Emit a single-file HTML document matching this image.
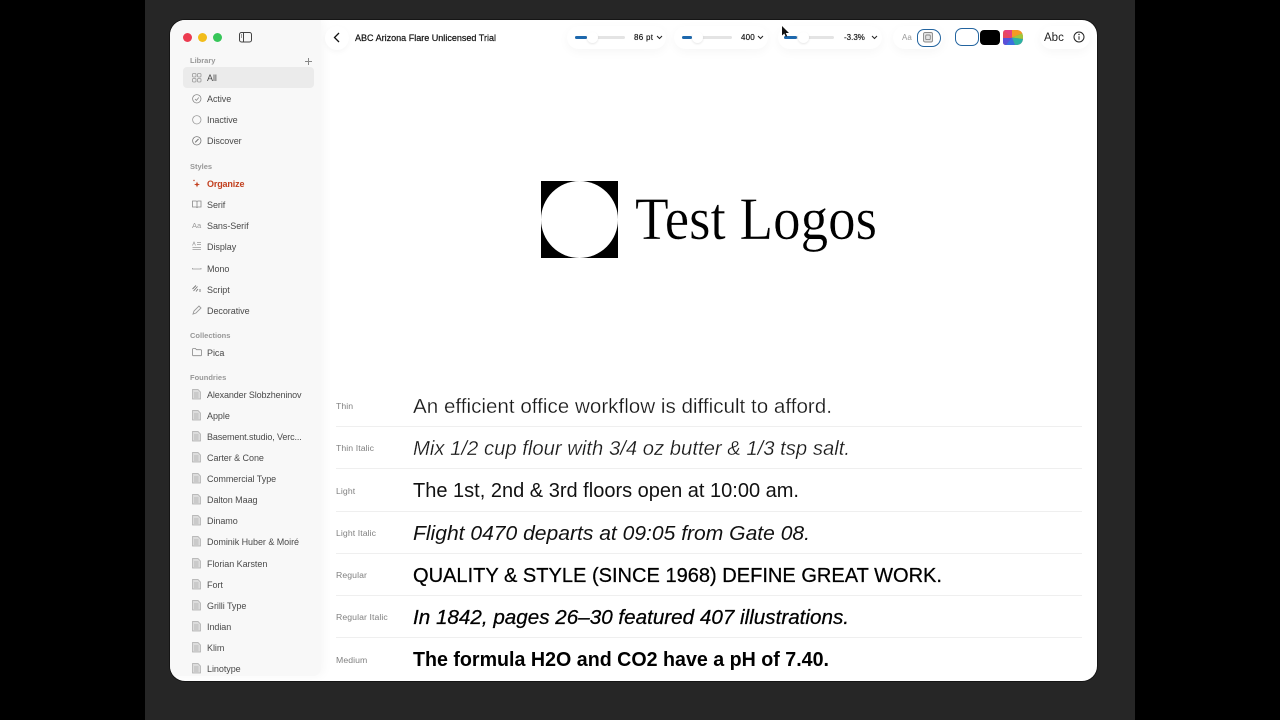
<!DOCTYPE html>
<html><head><meta charset="utf-8"><style>
html,body{margin:0;padding:0;width:1280px;height:720px;overflow:hidden;background:#000;font-family:"Liberation Sans",sans-serif}
#all{position:absolute;left:0;top:0;width:1280px;height:720px;filter:blur(.3px)}
#bg{position:absolute;left:145px;top:0;width:990px;height:720px;background:#262626}
#win{position:absolute;left:170px;top:20px;width:927px;height:661px;background:#fff;border-radius:15px;overflow:hidden;box-shadow:0 0 0 1px #151515}
#side{position:absolute;left:0;top:0;width:151px;height:656px;background:#f8f8f8;border-radius:0 0 8px 0;box-shadow:3px 0 10px rgba(0,0,0,.035)}
.a{position:absolute;white-space:nowrap}
.i{position:absolute;left:207px;font-size:9px;line-height:12px;color:#4a4a4a;white-space:nowrap;letter-spacing:-.05px}
.h{position:absolute;left:190px;font-size:7.5px;line-height:10px;color:#808080;font-weight:bold;white-space:nowrap;opacity:.8}
.l{position:absolute;left:336px;font-size:8.7px;line-height:12px;color:#808080;white-space:nowrap;letter-spacing:.08px}
.d{position:absolute;left:336px;width:746px;height:1px;background:#efefef}
.pill{position:absolute;background:#fff;border-radius:13px;box-shadow:0 3px 10px rgba(0,0,0,.04)}
.tr{position:absolute;height:3px;background:#e4e4e4;border-radius:2px}
.fi{position:absolute;height:3px;background:#1d68ad;border-radius:2px}
.kn{position:absolute;width:11px;height:11px;border-radius:50%;background:#fff;box-shadow:0 1px 2px rgba(0,0,0,.1)}
.v{position:absolute;font-size:8px;line-height:12px;color:#222;white-space:nowrap}
svg{position:absolute;overflow:visible}
</style></head><body><div id="all">
<div id="bg"></div>
<div id="win"><div id="side"></div></div>

<div class="a" style="left:183px;top:33px;width:9px;height:9px;border-radius:50%;background:#ec3b50"></div>
<div class="a" style="left:198px;top:33px;width:9px;height:9px;border-radius:50%;background:#f2bd1b"></div>
<div class="a" style="left:213px;top:33px;width:9px;height:9px;border-radius:50%;background:#37c659"></div>
<svg style="left:239px;top:32px" width="13" height="11" fill="none" stroke="#444" stroke-width="1"><rect x=".5" y=".5" width="12" height="9.5" rx="2"/><path d="M4.5 .5V10M2 3h1M2 5h1"/></svg>

<div class="h" style="top:56px">Library</div>
<svg style="left:305px;top:58px" width="7" height="7" stroke="#888" stroke-width="1"><path d="M3.5 0v7M0 3.500h7"/></svg>
<div class="a" style="left:183px;top:67px;width:131px;height:21px;background:#ebebeb;border-radius:4px"></div>
<div class="i" style="top:72px">All</div>
<svg style="left:192px;top:73px" width="10" height="10" fill="none" stroke="#999" stroke-width=".8"><rect x=".5" y=".5" width="3.500" height="3.500" rx="1"/><rect x="5.500" y=".5" width="3.500" height="3.500" rx="1"/><rect x=".5" y="5.500" width="3.500" height="3.500" rx="1"/><rect x="5.500" y="5.500" width="3.500" height="3.500" rx="1"/></svg>
<div class="i" style="top:93px">Active</div>
<svg style="left:192px;top:94px" width="10" height="10" fill="none" stroke="#888" stroke-width=".8"><circle cx="4.800" cy="4.800" r="4.200"/><path d="M3 5l1.400 1.400L6.800 3.500"/></svg>
<div class="i" style="top:114px">Inactive</div>
<svg style="left:192px;top:115px" width="10" height="10" fill="none" stroke="#999" stroke-width=".8"><circle cx="4.800" cy="4.800" r="4.200"/></svg>
<div class="i" style="top:135px">Discover</div>
<svg style="left:192px;top:136px" width="10" height="10" fill="none" stroke="#777" stroke-width=".8"><circle cx="4.800" cy="4.800" r="4.200"/><path d="M3.200 6.400L6.500 3" stroke-width="1.100"/></svg>

<div class="h" style="top:162px">Styles</div>
<div class="i" style="top:178px;color:#c2401f;font-weight:bold;letter-spacing:-.15px">Organize</div>
<svg style="left:192px;top:179px" width="10" height="10" fill="#c2401f"><path d="M5 2.500l.8 2.200L8 5.500l-2.200.8L5 8.500l-.8-2.200L2 5.500l2.200-.8z"/><circle cx="2" cy="1.500" r=".7"/></svg>
<div class="i" style="top:199px">Serif</div>
<svg style="left:192px;top:200px" width="10" height="9" fill="none" stroke="#888" stroke-width=".8"><path d="M.5 1h3.500q1 0 1 1v6q0-1-1-1H.5zM9 1H6q-1 0-1 1v6q0-1 1-1h3z"/></svg>
<div class="i" style="top:220px">Sans-Serif</div>
<div class="a" style="left:192px;top:221px;font-size:7.500px;line-height:10px;color:#999">Aa</div>
<div class="i" style="top:241px">Display</div>
<svg style="left:192px;top:241px" width="10" height="10" fill="none" stroke="#999" stroke-width=".7"><path d="M.5 4.500L2 1l1.500 3.500M5 1.500h4M5 3.500h4M.5 6.500h8.500M.5 8.500h8.500"/></svg>
<div class="i" style="top:263px">Mono</div>
<svg style="left:192px;top:267px" width="10" height="5" fill="none" stroke="#999" stroke-width=".8"><path d="M.5 1v1h8.500v-1"/></svg>
<div class="i" style="top:284px">Script</div>
<svg style="left:192px;top:284px" width="10" height="10" fill="none" stroke="#777" stroke-width=".9"><path d="M.5 5L4 1.500M1.500 7L5.500 2.500M4 7.500l2-2.500M8 5v3"/></svg>
<div class="i" style="top:305px">Decorative</div>
<svg style="left:192px;top:305px" width="10" height="10" fill="none" stroke="#999" stroke-width=".9"><path d="M1 9l1-3L7 1l2 2-5 5z"/></svg>

<div class="h" style="top:331px">Collections</div>
<div class="i" style="top:347px">Pica</div>
<svg style="left:192px;top:348px" width="10" height="9" fill="none" stroke="#888" stroke-width=".8"><path d="M.5 1.500q0-1 1-1h2l1 1.200h4q1 0 1 1v4q0 1-1 1h-7q-1 0-1-1z"/></svg>

<div class="h" style="top:373px">Foundries</div>
<div class="i" style="top:389px;letter-spacing:-.12px">Alexander Slobzheninov</div>
<div class="i" style="top:410px">Apple</div>
<div class="i" style="top:431px;letter-spacing:-.12px">Basement.studio, Verc...</div>
<div class="i" style="top:452px">Carter &amp; Cone</div>
<div class="i" style="top:473px">Commercial Type</div>
<div class="i" style="top:494px">Dalton Maag</div>
<div class="i" style="top:515px">Dinamo</div>
<div class="i" style="top:536px">Dominik Huber &amp; Moiré</div>
<div class="i" style="top:558px">Florian Karsten</div>
<div class="i" style="top:579px">Fort</div>
<div class="i" style="top:600px">Grilli Type</div>
<div class="i" style="top:621px">Indian</div>
<div class="i" style="top:642px">Klim</div>
<div class="i" style="top:663px">Linotype</div>
<svg style="left:192px;top:389px" width="10" height="285" fill="#dcdcdc" stroke="#aaa" stroke-width=".7">
<defs><g id="f"><path d="M.5.500h5.500l2.500 2.500v7H.5z"/><path d="M2 4h4.500M2 6h4.500M2 8h4.500" fill="none"/></g></defs>
<use href="#f" y="0"/><use href="#f" y="21"/><use href="#f" y="42"/><use href="#f" y="63"/><use href="#f" y="84"/><use href="#f" y="105"/><use href="#f" y="126"/><use href="#f" y="147"/><use href="#f" y="169"/><use href="#f" y="190"/><use href="#f" y="211"/><use href="#f" y="232"/><use href="#f" y="253"/><use href="#f" y="274"/></svg>

<div class="a" style="left:325px;top:26px;width:24px;height:24px;border-radius:50%;background:#fff;box-shadow:0 2px 6px rgba(0,0,0,.04)"></div>
<svg style="left:333px;top:32px" width="8" height="11" fill="none" stroke="#111" stroke-width="1.300"><path d="M6 1L1.500 5.500 6 10"/></svg>
<svg style="left:355px;top:30px" width="145" height="15"><text x="0" y="11" font-size="9" fill="#111" stroke="#111" stroke-width=".2" textLength="141" lengthAdjust="spacingAndGlyphs">ABC Arizona Flare Unlicensed Trial</text></svg>

<div class="pill" style="left:567px;top:26px;width:99px;height:23px"></div>
<div class="pill" style="left:674px;top:26px;width:94px;height:23px"></div>
<div class="pill" style="left:778px;top:26px;width:104px;height:23px"></div>
<div class="pill" style="left:893px;top:26px;width:50px;height:23px"></div>
<div class="pill" style="left:1040px;top:26px;width:50px;height:23px"></div>

<div class="tr" style="left:575px;top:36px;width:50px"></div><div class="fi" style="left:575px;top:36px;width:12px"></div><div class="kn" style="left:587px;top:32px"></div>
<div class="v" style="left:634px;top:32px;letter-spacing:.3px;text-shadow:0 0 .4px #111">86 pt</div>
<svg style="left:656px;top:35px" width="7" height="5" fill="none" stroke="#222" stroke-width="1"><path d="M1 1l2.500 2.500L6 1"/></svg>
<div class="tr" style="left:682px;top:36px;width:50px"></div><div class="fi" style="left:682px;top:36px;width:10px"></div><div class="kn" style="left:692px;top:32px"></div>
<div class="v" style="left:741px;top:32px;letter-spacing:.2px;text-shadow:0 0 .4px #111">400</div>
<svg style="left:757px;top:35px" width="7" height="5" fill="none" stroke="#222" stroke-width="1"><path d="M1 1l2.500 2.500L6 1"/></svg>
<div class="tr" style="left:784px;top:36px;width:50px"></div><div class="fi" style="left:784px;top:36px;width:13px"></div><div class="kn" style="left:798px;top:32px"></div>
<div class="v" style="left:844px;top:32px;text-shadow:0 0 .4px #111">-3.3%</div>
<svg style="left:871px;top:35px" width="7" height="5" fill="none" stroke="#222" stroke-width="1"><path d="M1 1l2.500 2.500L6 1"/></svg>
<svg style="left:782px;top:26px" width="8" height="12" fill="#111"><path d="M0 0v9.500l2.300-2 1.500 3.200 1.400-.6L3.800 7H7z"/></svg>

<div class="a" style="left:902px;top:32px;font-size:8px;line-height:12px;color:#999">Aa</div>
<div class="a" style="left:917px;top:29px;width:22px;height:16px;border:1.500px solid #23649f;border-radius:7px 9px 9px 7px"></div>
<svg style="left:923px;top:32px" width="10" height="11" fill="none" stroke="#888" stroke-width=".9"><rect x=".5" y=".5" width="9" height="9.500" rx="1.500" fill="#e4e4e4"/><rect x="2.700" y="3" width="4.600" height="4.600" rx="1"/></svg>
<div class="a" style="left:955px;top:28px;width:22px;height:16px;border:1.500px solid #23649f;border-radius:7px;background:#fff"></div>
<div class="a" style="left:980px;top:30px;width:20px;height:15px;background:#000;border-radius:4px"></div>
<svg style="left:1003px;top:30px" width="20" height="15"><defs><clipPath id="c"><path d="M3 0h10q7 0 7 7.500T13 15H3q-3 0-3-3V3q0-3 3-3z"/></clipPath></defs><g clip-path="url(#c)"><rect width="20" height="15" fill="#e8475f"/><rect x="0" y="8" width="9" height="7" fill="#5a50d8"/><path d="M9 7.500L0 0h9z" fill="#e6407f"/><path d="M9 7.500L9 0h11v3z" fill="#f59a23"/><path d="M9 7.500L20 3v6z" fill="#a0c83a"/><path d="M9 7.500L20 9v6H12z" fill="#2bb3a3"/><path d="M9 7.500L12 15H3z" fill="#3a70e0"/></g></svg>
<div class="a" style="left:1044px;top:31px;font-size:11.500px;line-height:15px;color:#222">Abc</div>
<svg style="left:1073px;top:31px" width="12" height="12" fill="none" stroke="#222" stroke-width="1"><circle cx="6" cy="6" r="5"/><path d="M6 5.300v3.500"/><circle cx="6" cy="3.500" r=".7" fill="#222" stroke="none"/></svg>

<div class="a" style="left:541px;top:181px;width:77px;height:77px;background:#000;overflow:hidden"><div style="width:77px;height:77px;border-radius:50%;background:#fff"></div></div>
<svg style="left:630px;top:180px" width="260" height="80"><text x="5" y="59" font-family="Liberation Serif" font-size="60" fill="#000" stroke="#fff" stroke-width=".35" textLength="242" lengthAdjust="spacingAndGlyphs">Test Logos</text></svg>

<div class="l" style="top:400px">Thin</div>
<div class="l" style="top:442px">Thin Italic</div>
<div class="l" style="top:485px">Light</div>
<div class="l" style="top:527px">Light Italic</div>
<div class="l" style="top:569px">Regular</div>
<div class="l" style="top:611px">Regular Italic</div>
<div class="l" style="top:654px">Medium</div>
<div class="d" style="top:426px"></div><div class="d" style="top:468px"></div><div class="d" style="top:511px"></div><div class="d" style="top:553px"></div><div class="d" style="top:595px"></div><div class="d" style="top:637px"></div>

<svg style="left:0;top:0" width="1280" height="720" font-size="20" fill="#111">
<text x="413" y="413" fill="#1a1a1a" stroke="#fff" stroke-width=".25" textLength="419" lengthAdjust="spacingAndGlyphs">An efficient office workflow is difficult to afford.</text>
<text x="413" y="455" fill="#1a1a1a" stroke="#fff" stroke-width=".25" font-style="italic" textLength="437" lengthAdjust="spacingAndGlyphs">Mix 1/2 cup flour with 3/4 oz butter &amp; 1/3 tsp salt.</text>
<text x="413" y="497" textLength="386" lengthAdjust="spacingAndGlyphs">The 1st, 2nd &amp; 3rd floors open at 10:00 am.</text>
<text x="413" y="540" font-style="italic" textLength="397" lengthAdjust="spacingAndGlyphs">Flight 0470 departs at 09:05 from Gate 08.</text>
<text x="413" y="582" fill="#000" stroke="#000" stroke-width=".25" textLength="529" lengthAdjust="spacingAndGlyphs">QUALITY &amp; STYLE (SINCE 1968) DEFINE GREAT WORK.</text>
<text x="413" y="624" fill="#000" stroke="#000" stroke-width=".25" font-style="italic" textLength="436" lengthAdjust="spacingAndGlyphs">In 1842, pages 26–30 featured 407 illustrations.</text>
<text x="413" y="666" fill="#000" font-weight="bold" textLength="416" lengthAdjust="spacingAndGlyphs">The formula H2O and CO2 have a pH of 7.40.</text>
</svg>
</div></body></html>
